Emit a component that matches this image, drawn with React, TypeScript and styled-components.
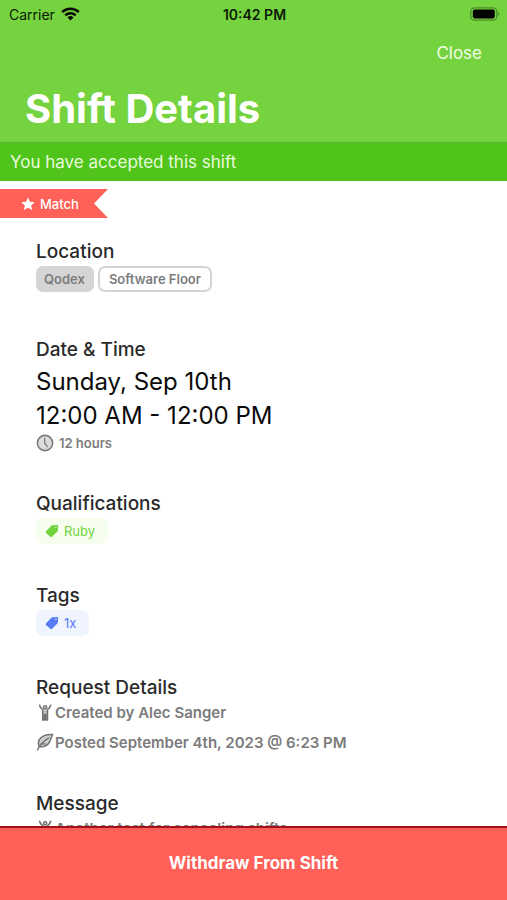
import React from "react";
import styled, { createGlobalStyle } from "styled-components";

const GlobalStyle = createGlobalStyle`
  * { box-sizing: border-box; }
  body { margin: 0; background: #fff; font-family: Inter, "Liberation Sans", sans-serif; }
  h1, h2, p, ul { margin: 0; padding: 0; }
`;

const Screen = styled.div`
  height: 100vh;
  display: flex;
  flex-direction: column;
  overflow: hidden;
`;

const Header = styled.header`
  flex: none;
  background: #74d33e;
`;

const StatusBar = styled.div`
  display: grid;
  grid-template-columns: 1fr auto 1fr;
  align-items: center;
  height: 28px;
  padding: 0 7px 0 9px;
  font-size: 14px;
  color: #0c1a06;
`;

const Carrier = styled.span`
  display: flex;
  align-items: center;
  gap: 6px;
`;

const Clock = styled.time`
  font-weight: 600;
`;

const BatteryIcon = styled.svg`
  justify-self: end;
`;

const NavBar = styled.nav`
  display: flex;
  justify-content: flex-end;
  align-items: center;
  height: 50px;
  padding: 0 25px;
`;

const CloseButton = styled.button`
  border: 0;
  padding: 0;
  background: none;
  font: inherit;
  font-size: 17px;
  color: #f1ffe8;
  cursor: pointer;
`;

const PageTitle = styled.h1`
  padding: 6px 25px 8px;
  font-size: 40px;
  line-height: 50px;
  font-weight: 700;
  color: #fff;
`;

const Banner = styled.p`
  border-top: 1px solid #5bb52c;
  padding: 1px 10px 0;
  font-size: 17px;
  line-height: 37px;
  background: #50c41a;
  color: #e9fbdd;
`;

const Content = styled.main`
  flex: 1;
  min-height: 0;
  overflow: hidden;
  padding-top: 8px;
`;

const Ribbon = styled.div`
  display: flex;
  align-items: center;
  gap: 5px;
  width: 108px;
  height: 29px;
  padding-left: 21px;
  background: #ff6057;
  clip-path: polygon(0 0, 100% 0, 94px 50%, 100% 100%, 0 100%);
  font-size: 13px;
  font-weight: 500;
  color: #fff;
`;

const Section = styled.section`
  padding: 0 36px 37px;

  &:first-of-type {
    padding-top: 20px;
    padding-bottom: 43px;
  }
`;

const SectionTitle = styled.h2`
  font-size: 19px;
  line-height: 28px;
  font-weight: 500;
  color: #2a2a2a;
`;

const Chips = styled.ul`
  display: flex;
  gap: 4px;
  && { padding-bottom: 1px; }
  list-style: none;
`;

type ChipKind = "solid" | "outline" | "green" | "blue";

const chipStyles: Record<
  ChipKind,
  { bg: string; border: string; text: string; padding: string; weight: number }
> = {
  solid: { bg: "#d5d5d5", border: "#d5d5d5", text: "#7d7d7d", padding: "0 7px 0 6px", weight: 600 },
  outline: { bg: "#ffffff", border: "#d5d5d5", text: "#7d7d7d", padding: "0 9px", weight: 600 },
  green: { bg: "#f6ffed", border: "#f6ffed", text: "#70d33e", padding: "0 11px 0 7px", weight: 400 },
  blue: { bg: "#eff4ff", border: "#eff4ff", text: "#587cf4", padding: "0 11px 0 7px", weight: 400 },
};

const Chip = styled.li<{ $kind: ChipKind }>`
  display: flex;
  align-items: center;
  gap: 5px;
  height: 26px;
  padding: ${(p) => chipStyles[p.$kind].padding};
  border: 2px solid ${(p) => chipStyles[p.$kind].border};
  border-radius: 7px;
  background: ${(p) => chipStyles[p.$kind].bg};
  color: ${(p) => chipStyles[p.$kind].text};
  font-size: 13px;
  font-weight: ${(p) => chipStyles[p.$kind].weight};
`;

const When = styled.p`
  && { padding-top: 1px; }
  font-size: 24px;
  line-height: 34px;
  color: #0b0b0b;
`;

const Duration = styled.p`
  display: flex;
  align-items: center;
  gap: 5px;
  height: 20px;
  font-size: 13px;
  font-weight: 600;
  color: #7d7d7d;
`;

const DetailRow = styled.p`
  display: flex;
  align-items: center;
  gap: 1px;
  height: 30px;
  font-size: 15px;
  font-weight: 600;
  color: #7b7b7b;
  white-space: nowrap;
`;

const Details = styled.div`
  margin: -5px 0 -4px;
`;

const WithdrawButton = styled.button`
  flex: none;
  height: 74px;
  border: 0;
  border-top: 2px solid #a3101c;
  padding: 0 0 2px;
  background: #ff6057;
  font: inherit;
  font-size: 17px;
  font-weight: 700;
  color: #fff;
  cursor: pointer;
`;

const WifiIcon = () => (
  <svg width="19" height="14" viewBox="0 0 19 14" fill="none" stroke="#050a03" strokeWidth="2.5" aria-hidden="true">
    <path d="M1.2 5.2a11.8 11.8 0 0 1 16.6 0" />
    <path d="M4.3 8.4a7.4 7.4 0 0 1 10.4 0" />
    <path d="M9.5 13.6 6.5 10.5a4.3 4.3 0 0 1 6 0z" fill="#050a03" stroke="none" />
  </svg>
);

const Battery = () => (
  <BatteryIcon width="30" height="14" viewBox="0 0 30 14" aria-hidden="true">
    <rect x="0.8" y="0.8" width="26" height="12.4" rx="3.6" fill="none" stroke="#4c8c2a" strokeWidth="1.3" />
    <rect x="2.8" y="2.6" width="22" height="8.8" rx="1.8" fill="#000" />
    <path d="M28.2 4.8c1.6.7 1.6 3.7 0 4.4z" fill="#4c8c2a" />
  </BatteryIcon>
);

const StarIcon = () => (
  <svg width="14" height="14" viewBox="0 0 24 24" fill="#fff" aria-hidden="true">
    <path d="M12 .8l3.4 7.3 8 .9-6 5.4 1.7 7.9L12 18.3l-7.1 4 1.7-7.9-6-5.4 8-.9z" />
  </svg>
);

const TagIcon = () => (
  <svg width="14" height="14" viewBox="0 0 14 14" fill="currentColor" aria-hidden="true">
    <path fillRule="evenodd" d="M7.4 1.300 12 .9c.8 0 1.200.4 1.200 1.100l-.3 4.600c0 .4-.2.7-.5 1l-5.100 5c-.7.7-1.600.7-2.300 0L1.300 9.200c-.7-.7-.7-1.600 0-2.300l5.100-5.200c.3-.3.6-.4 1-.4zM11 2.500a.7.7 0 1 0 0 1.400.7.7 0 0 0 0-1.400z" />
  </svg>
);

const ClockIcon = () => (
  <svg width="18" height="18" viewBox="0 0 18 18" fill="none" stroke="#7c7c7c" strokeLinecap="round" aria-hidden="true">
    <circle cx="9" cy="9" r="7.6" fill="#dcdcdc" strokeWidth="1.6" />
    <path d="M8.7 4.200V9l2.600 3.600" strokeWidth="1.3" />
  </svg>
);

const PersonIcon = () => (
  <svg width="18" height="18" viewBox="0 0 18 18" fill="none" stroke="#6e6e6e" strokeLinecap="round" strokeLinejoin="round" aria-hidden="true">
    <path d="M6.700 7.200h4.800v4.600H6.700z" fill="#bcbcbc" stroke="none" />
    <path d="M3.600 2.200c.3 2.300 1.400 3.500 3.100 4.400v10.400h1.700v-5.200h1.400v5.200h1.700V6.600c1.700-.9 2.800-2.100 3.100-4.400" strokeWidth="1.500" />
    <circle cx="9.100" cy="4.300" r="1.700" fill="#c9c9c9" strokeWidth="1.300" />
  </svg>
);

const LeafIcon = () => (
  <svg width="18" height="18" viewBox="0 0 18 18" fill="none" stroke="#747474" strokeLinecap="round" strokeLinejoin="round" aria-hidden="true">
    <path d="M16.600 1.500C10.500 1.300 5.400 2.900 3.300 6.700c-1.300 2.400-1 4.800-.1 6.800 3.500.6 7.300-.2 9.500-3.200 1.900-2.600 2.300-5.600 3.900-8.800z" fill="#d0d0d0" strokeWidth="1.500" />
    <path d="M1.500 17C3.200 12.200 7.300 8.400 12.600 4.900M4.700 11.200l4.600-.3" strokeWidth="1.300" />
  </svg>
);

export default function App() {
  return (
    <Screen>
      <GlobalStyle />
      <Header>
        <StatusBar>
          <Carrier>Carrier <WifiIcon /></Carrier>
          <Clock>10:42 PM</Clock>
          <Battery />
        </StatusBar>
        <NavBar><CloseButton type="button">Close</CloseButton></NavBar>
        <PageTitle>Shift Details</PageTitle>
        <Banner>You have accepted this shift</Banner>
      </Header>
      <Content>
        <Ribbon><StarIcon />Match</Ribbon>
        <Section>
          <SectionTitle>Location</SectionTitle>
          <Chips>
            <Chip $kind="solid">Qodex</Chip>
            <Chip $kind="outline">Software Floor</Chip>
          </Chips>
        </Section>
        <Section>
          <SectionTitle>Date &amp; Time</SectionTitle>
          <When>Sunday, Sep 10th<br />12:00 AM - 12:00 PM</When>
          <Duration><ClockIcon />12 hours</Duration>
        </Section>
        <Section>
          <SectionTitle>Qualifications</SectionTitle>
          <Chips><Chip $kind="green"><TagIcon />Ruby</Chip></Chips>
        </Section>
        <Section>
          <SectionTitle>Tags</SectionTitle>
          <Chips><Chip $kind="blue"><TagIcon />1x</Chip></Chips>
        </Section>
        <Section>
          <SectionTitle>Request Details</SectionTitle>
          <Details>
            <DetailRow><PersonIcon />Created by Alec Sanger</DetailRow>
            <DetailRow><LeafIcon />Posted September 4th, 2023 @ 6:23 PM</DetailRow>
          </Details>
        </Section>
        <Section>
          <SectionTitle>Message</SectionTitle>
          <Details>
            <DetailRow><PersonIcon />Another test for canceling shifts</DetailRow>
          </Details>
        </Section>
      </Content>
      <WithdrawButton type="button">Withdraw From Shift</WithdrawButton>
    </Screen>
  );
}
